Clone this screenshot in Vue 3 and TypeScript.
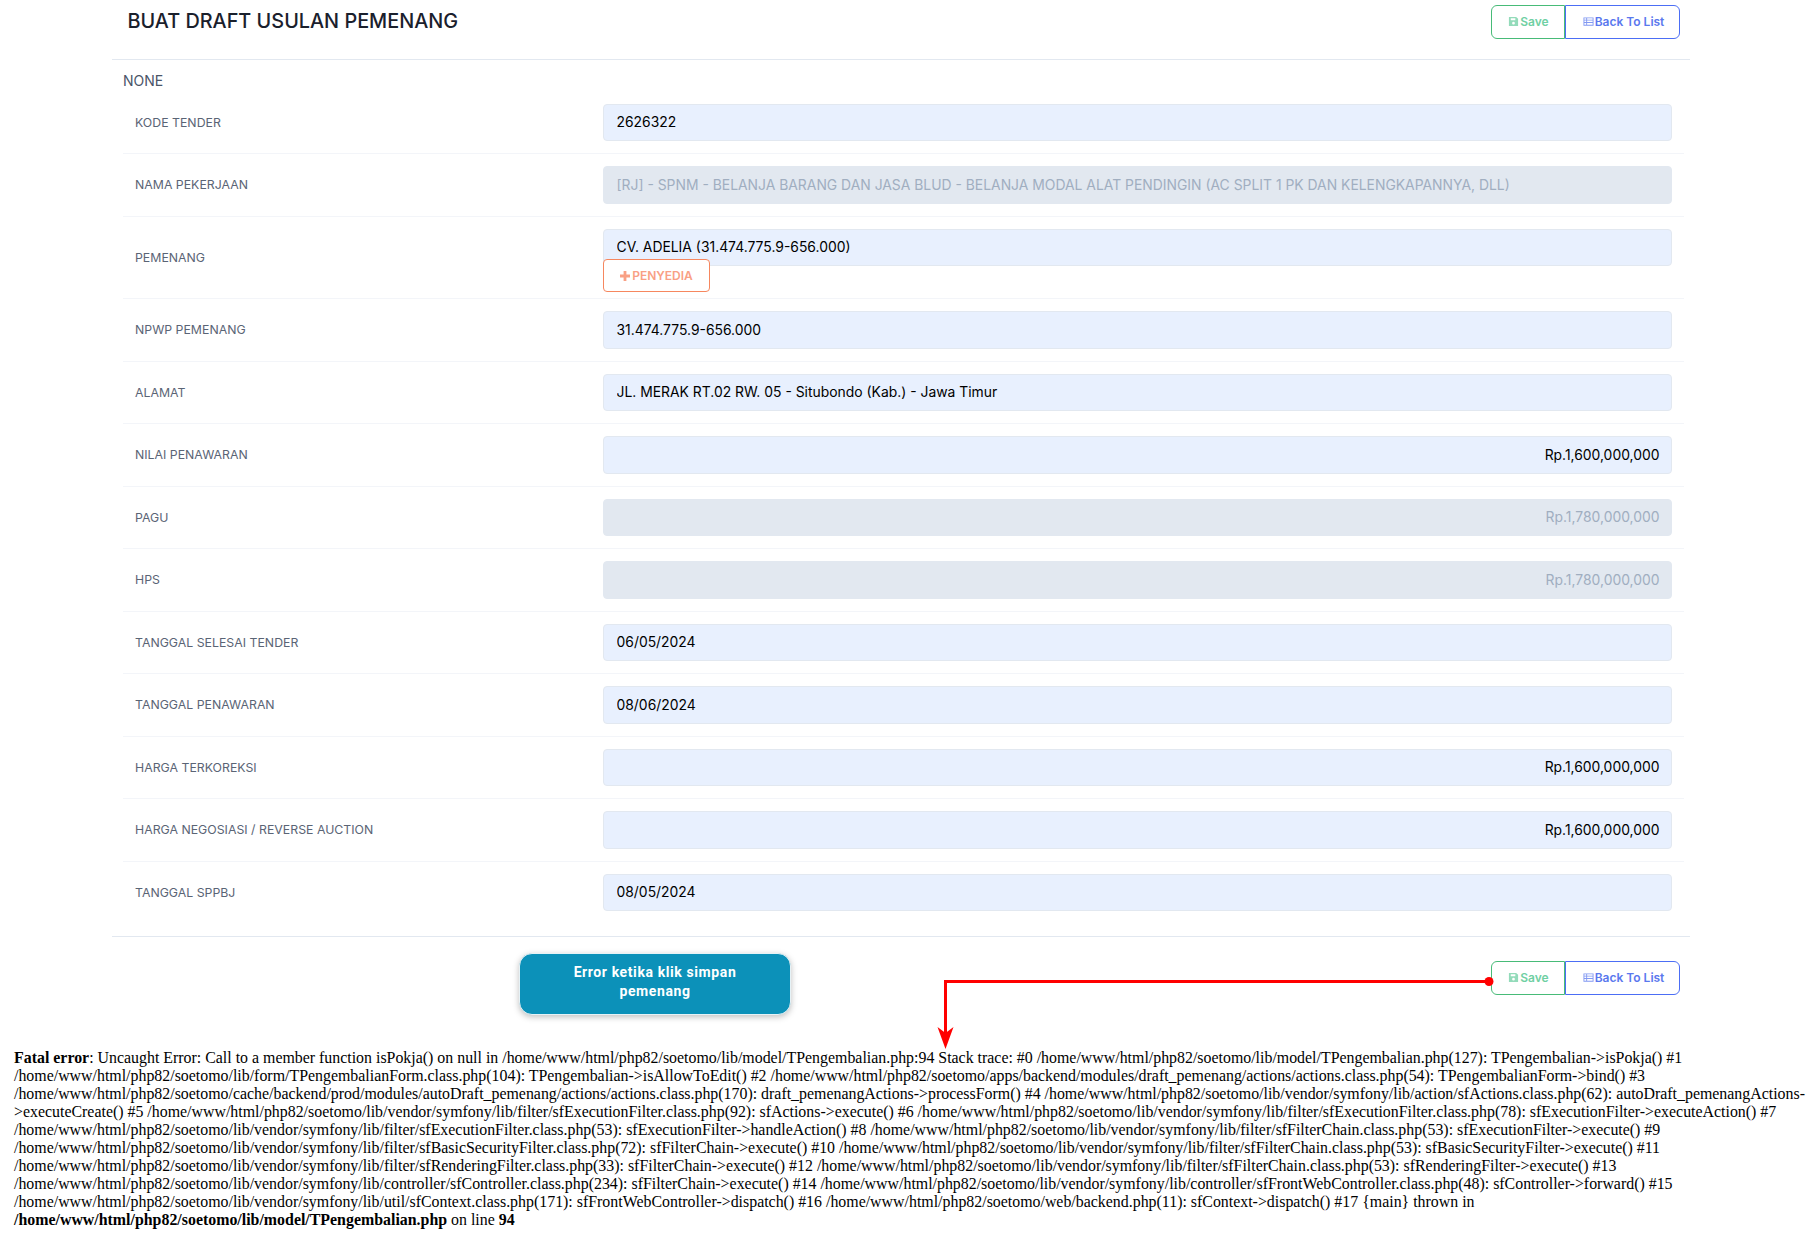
<script setup lang="ts">
interface Field {
  label: string
  value: string
  disabled?: boolean
  right?: boolean
  action?: boolean
}

const fields: Field[] = [
  { label: 'KODE TENDER', value: '2626322' },
  {
    label: 'NAMA PEKERJAAN',
    value: '[RJ] - SPNM - BELANJA BARANG DAN JASA BLUD - BELANJA MODAL ALAT PENDINGIN (AC SPLIT 1 PK DAN KELENGKAPANNYA, DLL)',
    disabled: true,
  },
  { label: 'PEMENANG', value: 'CV. ADELIA (31.474.775.9-656.000)', action: true },
  { label: 'NPWP PEMENANG', value: '31.474.775.9-656.000' },
  { label: 'ALAMAT', value: 'JL. MERAK RT.02 RW. 05 - Situbondo (Kab.) - Jawa Timur' },
  { label: 'NILAI PENAWARAN', value: 'Rp.1,600,000,000', right: true },
  { label: 'PAGU', value: 'Rp.1,780,000,000', right: true, disabled: true },
  { label: 'HPS', value: 'Rp.1,780,000,000', right: true, disabled: true },
  { label: 'TANGGAL SELESAI TENDER', value: '06/05/2024' },
  { label: 'TANGGAL PENAWARAN', value: '08/06/2024' },
  { label: 'HARGA TERKOREKSI', value: 'Rp.1,600,000,000', right: true },
  { label: 'HARGA NEGOSIASI / REVERSE AUCTION', value: 'Rp.1,600,000,000', right: true },
  { label: 'TANGGAL SPPBJ', value: '08/05/2024' },
]

const root = '/home/www/html/php82/soetomo'
const filter = `${root}/lib/vendor/symfony/lib/filter`
const trace =
  `: Uncaught Error: Call to a member function isPokja() on null in ${root}/lib/model/TPengembalian.php:94 Stack trace: ` +
  `#0 ${root}/lib/model/TPengembalian.php(127): TPengembalian->isPokja() ` +
  `#1 ${root}/lib/form/TPengembalianForm.class.php(104): TPengembalian->isAllowToEdit() ` +
  `#2 ${root}/apps/backend/modules/draft_pemenang/actions/actions.class.php(54): TPengembalianForm->bind() ` +
  `#3 ${root}/cache/backend/prod/modules/autoDraft_pemenang/actions/actions.class.php(170): draft_pemenangActions->processForm() ` +
  `#4 ${root}/lib/vendor/symfony/lib/action/sfActions.class.php(62): autoDraft_pemenangActions->executeCreate() ` +
  `#5 ${filter}/sfExecutionFilter.class.php(92): sfActions->execute() ` +
  `#6 ${filter}/sfExecutionFilter.class.php(78): sfExecutionFilter->executeAction() ` +
  `#7 ${filter}/sfExecutionFilter.class.php(53): sfExecutionFilter->handleAction() ` +
  `#8 ${filter}/sfFilterChain.class.php(53): sfExecutionFilter->execute() ` +
  `#9 ${filter}/sfBasicSecurityFilter.class.php(72): sfFilterChain->execute() ` +
  `#10 ${filter}/sfFilterChain.class.php(53): sfBasicSecurityFilter->execute() ` +
  `#11 ${filter}/sfRenderingFilter.class.php(33): sfFilterChain->execute() ` +
  `#12 ${filter}/sfFilterChain.class.php(53): sfRenderingFilter->execute() ` +
  `#13 ${root}/lib/vendor/symfony/lib/controller/sfController.class.php(234): sfFilterChain->execute() ` +
  `#14 ${root}/lib/vendor/symfony/lib/controller/sfFrontWebController.class.php(48): sfController->forward() ` +
  `#15 ${root}/lib/vendor/symfony/lib/util/sfContext.class.php(171): sfFrontWebController->dispatch() ` +
  `#16 ${root}/web/backend.php(11): sfContext->dispatch() ` +
  `#17 {main} thrown in `
const errorFile = `${root}/lib/model/TPengembalian.php`
</script>

<template>
  <div class="page">
    <main class="card">
      <header class="head">
        <h1 class="title">BUAT DRAFT USULAN PEMENANG</h1>
        <div class="btn-group">
          <button class="btn btn-save" type="button">
            <svg class="ico" viewBox="0 0 12 12"><path fill-rule="evenodd" d="M1.3 1h7.6L11 3.1v7.6a.3.3 0 0 1-.3.3H1.3a.3.3 0 0 1-.3-.3V1.3a.3.3 0 0 1 .3-.3zM3 2.400v2.200h5V2.400zM6 6.400a1.500 1.500 0 1 0 0 3 1.500 1.500 0 0 0 0-3z"/></svg>Save
          </button>
          <button class="btn btn-back" type="button">
            <svg class="ico" viewBox="0 0 12 12"><path fill-rule="evenodd" d="M.5 1.500h11v9H.5zM1.500 2.500v1.500h2V2.500zM4.500 2.500v1.500h6V2.500zM1.500 5v1.500h2V5zM4.500 5v1.500h6V5zM1.500 7.500v2h2v-2zM4.500 7.500v2h6v-2z"/></svg>Back To List
          </button>
        </div>
      </header>

      <section class="body">
        <div class="legend">NONE</div>
        <div v-for="f in fields" :key="f.label" class="row">
          <label class="lbl">{{ f.label }}</label>
          <div class="ctl">
            <input
              class="inp"
              :class="{ 'inp-right': f.right }"
              :value="f.value"
              :disabled="f.disabled"
              readonly
            />
            <button v-if="f.action" class="add" type="button">
              <svg class="plus" viewBox="0 0 10 10"><path d="M3.600 0h2.800v3.600H10v2.800H6.400V10H3.600V6.400H0V3.600h3.600z"/></svg>PENYEDIA
            </button>
          </div>
        </div>
      </section>

      <footer class="foot">
        <div class="note">Error ketika klik simpan pemenang</div>
        <div class="btn-group">
          <button class="btn btn-save" type="button">
            <svg class="ico" viewBox="0 0 12 12"><path fill-rule="evenodd" d="M1.3 1h7.6L11 3.1v7.6a.3.3 0 0 1-.3.3H1.3a.3.3 0 0 1-.3-.3V1.3a.3.3 0 0 1 .3-.3zM3 2.400v2.200h5V2.400zM6 6.400a1.500 1.500 0 1 0 0 3 1.500 1.500 0 0 0 0-3z"/></svg>Save
          </button>
          <button class="btn btn-back" type="button">
            <svg class="ico" viewBox="0 0 12 12"><path fill-rule="evenodd" d="M.5 1.500h11v9H.5zM1.500 2.500v1.500h2V2.500zM4.500 2.500v1.500h6V2.500zM1.500 5v1.500h2V5zM4.500 5v1.500h6V5zM1.500 7.500v2h2v-2zM4.500 7.500v2h6v-2z"/></svg>Back To List
          </button>
        </div>
        <svg class="arrow" width="560" height="80" viewBox="0 0 560 80">
          <path d="M553 9.500H9.500V62" fill="none" stroke="#f00" stroke-width="3" />
          <circle cx="553" cy="9.500" r="4.500" fill="#f00" />
          <path d="M1.500 55 9.500 61 17.500 55 9.500 77z" fill="#f00" />
        </svg>
      </footer>
    </main>

    <p class="fatal"><b>Fatal error</b>{{ trace }}<b>{{ errorFile }}</b> on line <b>94</b></p>
  </div>
</template>

<style scoped>
.page {
  width: 1812px;
  background: #fff;
}
.card {
  width: 1578px;
  margin-left: 112px;
  font-family: Inter, "Liberation Sans", sans-serif;
}
.head {
  height: 60px;
  box-sizing: border-box;
  border-bottom: 1px solid #e2e8f0;
  display: flex;
  justify-content: space-between;
  align-items: flex-start;
  padding: 5px 10px 0 15.5px;
}
.title {
  margin: 5px 0 0;
  font-size: 19.85px;
  line-height: 23px;
  font-weight: 500;
  color: #1a202c;
}
.btn-group {
  display: flex;
}
.btn {
  height: 34px;
  box-sizing: border-box;
  background: #fff;
  display: inline-flex;
  align-items: center;
  justify-content: center;
  font-family: Inter, "Liberation Sans", sans-serif;
  font-size: 12px;
  font-weight: 600;
  padding: 0 0 1px 1px;
  cursor: pointer;
}
.btn-save {
  width: 74px;
  color: #6fd0a3;
  border: 1px solid #48bb78;
  border-radius: 6px 0 0 6px;
}
.btn-back {
  width: 115px;
  color: #5a78ee;
  border: 1px solid #4c6ef5;
  border-radius: 0 6px 6px 0;
  padding-left: 2px;
}
.ico {
  width: 11px;
  height: 11px;
  margin-right: 1px;
  fill: currentColor;
  opacity: 0.75;
}
.body {
  padding: 0 6px 0 11px;
}
.legend {
  font-size: 14px;
  line-height: 22px;
  color: #4a5568;
  margin-top: 9.5px;
}
.row {
  display: grid;
  grid-template-columns: 468px 1fr;
  align-items: center;
  padding: 12px;
  border-bottom: 1px solid #f3f5f9;
}
.row:last-child {
  border-bottom: 0;
}
.lbl {
  font-size: 12.32px;
  color: #5a6475;
  font-weight: 400;
}
.ctl {
  display: flex;
  flex-direction: column;
  align-items: flex-start;
}
.inp {
  width: 100%;
  height: 37.5px;
  box-sizing: border-box;
  padding: 7px 11.500px 7px 12.500px;
  font-family: Inter, "Liberation Sans", sans-serif;
  font-size: 13.9px;
  color: #000;
  background: #e8f0fe;
  border: 1px solid #e2e8f0;
  border-radius: 4px;
  outline: 0;
}
.inp:disabled {
  background: #e2e8f0;
  color: #a0aec0;
}
.inp-right {
  text-align: right;
}
.add {
  width: 107px;
  height: 33px;
  margin: -7px 0 -6px;
  position: relative;
  box-sizing: border-box;
  background: #fff;
  border: 1px solid #f6875f;
  border-radius: 4px;
  color: #f9a084;
  font-family: Inter, "Liberation Sans", sans-serif;
  font-size: 12px;
  font-weight: 600;
  padding: 0;
  display: inline-flex;
  align-items: center;
  justify-content: center;
}
.plus {
  width: 10px;
  height: 10px;
  margin-right: 2px;
  fill: currentColor;
}
.foot {
  position: relative;
  border-top: 1px solid #e2e8f0;
  margin-top: 13px;
  height: 113px;
  box-sizing: border-box;
  padding: 24px 10px 0 407px;
  display: flex;
  justify-content: space-between;
  align-items: flex-start;
}
.note {
  width: 272px;
  height: 62px;
  margin-top: -8px;
  box-sizing: border-box;
  background: #0c91b9;
  border: 1px solid #e6f2f6;
  border-radius: 13px;
  box-shadow: 0 2px 6px rgba(0, 0, 0, 0.25);
  color: #fff;
  font-family: Roboto, sans-serif;
  font-size: 14px;
  font-weight: 700;
  line-height: 19px;
  letter-spacing: 0.6px;
  text-align: center;
  padding: 9px 30px;
}
.arrow {
  position: absolute;
  left: 824px;
  top: 35px;
  overflow: visible;
}
.fatal {
  margin: 0;
  padding: 0 0 0 14px;
  font-family: "Liberation Serif", "Times New Roman", serif;
  font-size: 15.9px;
  line-height: 18px;
  color: #000;
}
</style>
